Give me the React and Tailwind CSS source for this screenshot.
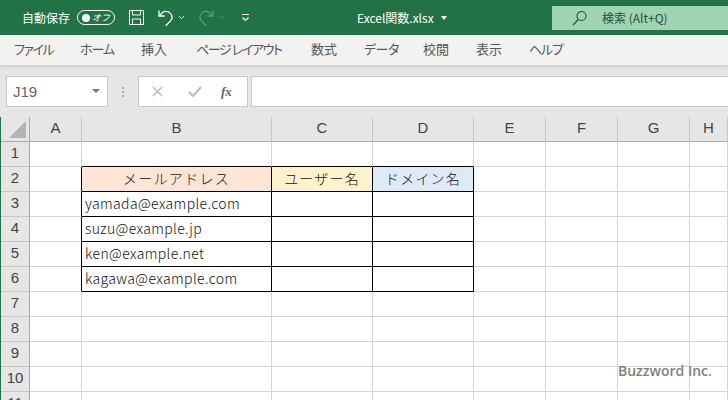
import { ChevronDown } from 'lucide-react'

const COLS = ['A', 'B', 'C', 'D', 'E', 'F', 'G', 'H']
const ROWS = [1, 2, 3, 4, 5, 6, 7, 8, 9, 10, 11]
const TABS = [
  ['ファイル', 'w-[66px] tracking-[-1.5px]'],
  ['ホーム', 'w-[61px] tracking-[-1px]'],
  ['挿入', 'w-[55px]'],
  ['ページ レイアウト', 'w-[115px] tracking-[-1.4px]'],
  ['数式', 'w-[53px]'],
  ['データ', 'w-[59px] tracking-[-0.5px]'],
  ['校閲', 'w-[53px]'],
  ['表示', 'w-[53px]'],
  ['ヘルプ', 'w-[60px] tracking-[-1.2px]'],
]

const FONT = "font-['Noto_Sans_CJK_JP','Liberation_Sans',sans-serif]"

// contents of the bordered table, keyed by row then column
const TABLE = {
  2: {
    B: ['メールアドレス', 'bg-[#fce4d6] tracking-[1.3px]'],
    C: ['ユーザー名', 'bg-[#fff2cc] tracking-[1.2px]'],
    D: ['ドメイン名', 'bg-[#ddebf7] tracking-[1.2px]'],
  },
  3: { B: ['yamada@example.com', 'pl-[3px] tracking-[0.38px]'], C: [''], D: [''] },
  4: { B: ['suzu@example.jp', 'pl-[3px] tracking-[0.38px]'], C: [''], D: [''] },
  5: { B: ['ken@example.net', 'pl-[3px] tracking-[0.38px]'], C: [''], D: [''] },
  6: { B: ['kagawa@example.com', 'pl-[3px] tracking-[0.38px]'], C: [''], D: [''] },
}

function SaveIcon() {
  return (
    <svg width="17" height="17" viewBox="0 0 17 17" fill="none" stroke="#fff" strokeWidth="1">
      <path d="M1.5 1.5h14v14h-14z" />
      <path d="M4.5 1.5v4.5h8v-4.5M4.5 15.5v-5.5h8v5.5" />
    </svg>
  )
}

function UndoIcon({ color, flip }) {
  return (
    <svg width="16" height="18" viewBox="0 0 16 18" fill="none" stroke={color} strokeWidth="1.3" className={flip ? '-scale-x-100' : ''}>
      <path d="M1 1.5v5.5h5.5" />
      <path d="M1.5 6.5 4.5 3.5c2-1.6 5.5-1.4 7.6.6 2.4 2.4 2.4 5.6.2 8l-4.6 4.6" />
    </svg>
  )
}

function TitleBar() {
  return (
    <div className="flex h-[35px] flex-none items-center bg-[#217346] pl-[22px] text-white">
      <span className="w-[55px] text-[12px] leading-none">自動保存</span>
      <div className="flex h-[15px] w-[38px] items-center justify-between rounded-full border border-white pr-[4px] pl-[4px]">
        <span className="h-[8px] w-[8px] rounded-full bg-white" />
        <span className="text-[9px] leading-none italic">オフ</span>
      </div>
      <span className="ml-[13px]"><SaveIcon /></span>
      <span className="ml-[13px]"><UndoIcon color="#fff" /></span>
      <ChevronDown size={9} strokeWidth={2.5} className="ml-[3px]" />
      <span className="ml-[12px]"><UndoIcon color="#5e9c7c" flip /></span>
      <ChevronDown size={9} strokeWidth={2} className="ml-[3px] text-[#5e9c7c]" />
      <svg width="9" height="9" viewBox="0 0 9 9" className="ml-[15px]" fill="none" stroke="#fff" strokeWidth="1.2">
        <path d="M1 1.5h7M1.5 4.5l3 3 3-3" />
      </svg>
      <div className="ml-[107px] flex w-[195px] items-center text-[12px]">
        <span className="whitespace-nowrap">Excel関数.xlsx</span>
        <span className="ml-[7px] h-0 w-0 border-x-[3.5px] border-t-[4px] border-x-transparent border-t-white" />
      </div>
      <div className="flex h-[24px] flex-1 items-center bg-[#9fd3b2] pl-[20px] text-[12px] text-[#23513a]">
        <svg width="16" height="16" viewBox="0 0 16 16" fill="none" stroke="#23513a" strokeWidth="1.1">
          <circle cx="9.5" cy="6" r="4.5" />
          <path d="M6.3 9.5 1 15" />
        </svg>
        <span className="ml-[14px]">検索 (Alt+Q)</span>
      </div>
    </div>
  )
}

function TabBar() {
  return (
    <div className="flex h-[30px] flex-none items-center bg-[#f3f2f1] pb-[2px] pl-[14px] text-[13px] text-[#555] shadow-[0_2px_4px_rgba(0,0,0,0.12)] [font-feature-settings:'palt']">
      {TABS.map(([label, cls]) => (
        <span key={label} className={`${cls} whitespace-nowrap`}>{label}</span>
      ))}
    </div>
  )
}

function FormulaBar() {
  return (
    <div className="flex h-[52px] flex-none items-start bg-[#e6e6e6] pt-[11px] pl-[6px]">
      <div className="flex h-[31px] w-[102px] items-center justify-between border border-[#c8c8c8] bg-white pt-[2px] pr-[7px] pl-[6px] font-['Liberation_Sans',sans-serif] text-[15px] text-[#666]">
        J19
        <span className="mb-[4px] h-0 w-0 border-x-[4px] border-t-[4px] border-x-transparent border-t-[#777]" />
      </div>
      <div className="ml-[5px] flex h-[31px] w-[20px] flex-col items-center justify-center gap-[2px]">
        <span className="h-[2px] w-[2px] bg-[#aaa]" />
        <span className="h-[2px] w-[2px] bg-[#aaa]" />
        <span className="h-[2px] w-[2px] bg-[#aaa]" />
      </div>
      <div className="ml-[5px] flex h-[31px] w-[110px] items-center border border-[#c8c8c8] bg-white pl-[13px]">
        <svg width="11" height="11" viewBox="0 0 12 12" stroke="#bbb" strokeWidth="1.6" fill="none">
          <path d="M1 1l10 10M11 1 1 11" />
        </svg>
        <svg width="14" height="12" viewBox="0 0 14 12" stroke="#bbb" strokeWidth="2" fill="none" className="ml-[25px]">
          <path d="M1 6l4 4 8-9" />
        </svg>
        <span className="ml-[19px] font-['Liberation_Serif',serif] text-[13px] font-bold text-[#666] italic">fx</span>
      </div>
      <div className="ml-[3px] h-[31px] flex-1 border-y border-l border-[#c8c8c8] bg-white" />
    </div>
  )
}

function Sheet() {
  return (
    <div className={`grid flex-1 grid-cols-[29px_52px_190px_101px_101px_72px_72px_72px_38px] auto-rows-[25px] overflow-hidden border-l border-l-[#217346] bg-white text-[14px] text-[#111] ${FONT}`}>
      {/* corner */}
      <div className="relative border-r border-b border-[#ababab] bg-[#e6e6e6]">
        <span className="absolute right-[3px] bottom-[3px] h-0 w-0 border-b-[17px] border-l-[17px] border-b-[#b4b4b4] border-l-transparent" />
      </div>
      {COLS.map((c) => (
        <div key={c} className="flex items-center justify-center border-r border-b border-r-[#c6c6c6] border-b-[#ababab] bg-[#e6e6e6] pb-[2px] font-['Liberation_Sans',sans-serif] text-[15px] text-[#444]">
          {c}
        </div>
      ))}
      {ROWS.map((r) => (
        <Row key={r} row={r} />
      ))}
    </div>
  )
}

function Row({ row }) {
  const cells = TABLE[row]
  return (
    <>
      <div className="flex items-center justify-center border-r border-b border-r-[#ababab] border-b-[#c6c6c6] bg-[#e6e6e6] pb-[1px] font-['Liberation_Sans',sans-serif] text-[15px] text-[#444]">
        {row}
      </div>
      {COLS.map((c) => {
        const cell = cells && cells[c]
        const isLeftOfTable = cells && c === 'A'
        const isAboveTable = row === 1 && (c === 'B' || c === 'C' || c === 'D')
        return (
          <div
            key={c}
            className={[
              'flex items-center whitespace-nowrap border-r border-b border-[#d4d4d4] pb-[2px] font-light',
              cell || isLeftOfTable ? 'border-r-black' : '',
              cell || isAboveTable ? 'border-b-black' : '',
              cell && cell[1] ? cell[1] : '',
              cell && row === 2 ? 'justify-center' : '',
            ].join(' ')}
          >
            {cell ? cell[0] : ''}
          </div>
        )
      })}
    </>
  )
}

export default function App() {
  return (
    <div className={`relative flex h-[400px] w-[728px] flex-col overflow-hidden bg-white ${FONT}`}>
      <TitleBar />
      <div className="relative z-10 flex-none"><TabBar /></div>
      <FormulaBar />
      <Sheet />
      <span className="absolute top-[360px] left-[618px] font-['Open_Sans',sans-serif] text-[14px] font-semibold text-[#7f7f7f]">
        Buzzword Inc.
      </span>
    </div>
  )
}
